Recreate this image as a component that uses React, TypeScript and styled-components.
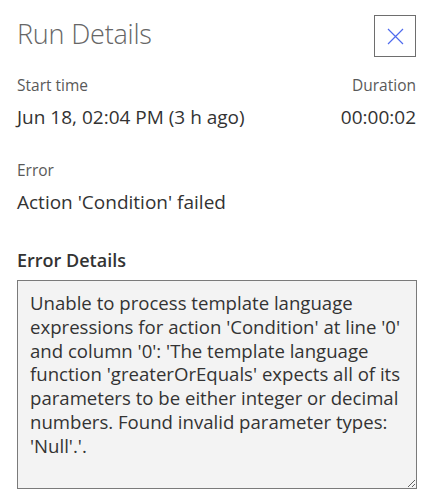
import React from "react";
import styled, { createGlobalStyle } from "styled-components";

const Global = createGlobalStyle`
  html, body { margin: 0; padding: 0; background: #ffffff; }
  body { font-family: "Open Sans", "Noto Sans", sans-serif; color: #333333; }
  * { box-sizing: border-box; }
`;

const Panel = styled.div`
  width: 427px;
  padding: 12px 11px 0 17px;
  display: flex;
  flex-direction: column;
`;

const Header = styled.div`
  display: flex;
  justify-content: space-between;
  align-items: flex-start;
  height: 44px;
`;

const Title = styled.h1`
  margin: 2px 0 0 0;
  font-size: 27px;
  font-weight: 300;
  color: #666666;
  letter-spacing: -0.2px;
  line-height: 40px;
`;

const CloseButton = styled.button`
  width: 42px;
  height: 42px;
  margin-top: 3px;
  border: 1px solid #6e6e6e;
  background: #ffffff;
  display: flex;
  align-items: center;
  justify-content: center;
  padding: 0;
  cursor: pointer;
`;

const Row = styled.div`
  display: flex;
  justify-content: space-between;
  margin-top: 19px;
`;

const Field = styled.div<{ $align?: "left" | "right" }>`
  display: flex;
  flex-direction: column;
  align-items: ${(p) => (p.$align === "right" ? "flex-end" : "flex-start")};
`;

const Label = styled.div`
  font-size: 15.5px;
  color: #595959;
  line-height: 20px;
`;

const Value = styled.div`
  font-size: 19px;
  color: #333333;
  line-height: 24px;
  margin-top: 10px;
`;

const Section = styled.div<{ $gap: number }>`
  margin-top: ${(p) => p.$gap}px;
`;

const SectionTitle = styled.div`
  font-size: 18px;
  font-weight: 600;
  color: #333333;
  line-height: 24px;
`;

const Details = styled.textarea`
  display: block;
  margin-top: 8px;
  width: 400px;
  height: 209px;
  padding: 10px 6px 10px 12px;
  border: 1px solid #7a7a7a;
  background: #f3f3f3;
  font-family: "Open Sans", "Noto Sans", sans-serif;
  font-size: 18.6px;
  line-height: 23.8px;
  color: #333333;
  resize: both;
  outline: none;
  overflow: hidden;
`;

const errorText =
  "Unable to process template language expressions for action 'Condition' at line '0' and column '0': 'The template language function 'greaterOrEquals' expects all of its parameters to be either integer or decimal numbers. Found invalid parameter types: 'Null'.'.";

export default function App() {
  return (
    <>
      <Global />
      <Panel>
        <Header>
          <Title>Run Details</Title>
          <CloseButton aria-label="Close">
            <svg width="17" height="17" viewBox="0 0 17 17">
              <path d="M1 1 L16 16 M16 1 L1 16" stroke="#4f6bed" strokeWidth="1.2" fill="none" />
            </svg>
          </CloseButton>
        </Header>
        <Row>
          <Field>
            <Label>Start time</Label>
            <Value>Jun 18, 02:04 PM (3 h ago)</Value>
          </Field>
          <Field $align="right">
            <Label>Duration</Label>
            <Value>00:00:02</Value>
          </Field>
        </Row>
        <Section $gap={31}>
          <Label>Error</Label>
          <Value>Action 'Condition' failed</Value>
        </Section>
        <Section $gap={34}>
          <SectionTitle>Error Details</SectionTitle>
          <Details readOnly value={errorText} />
        </Section>
      </Panel>
    </>
  );
}
